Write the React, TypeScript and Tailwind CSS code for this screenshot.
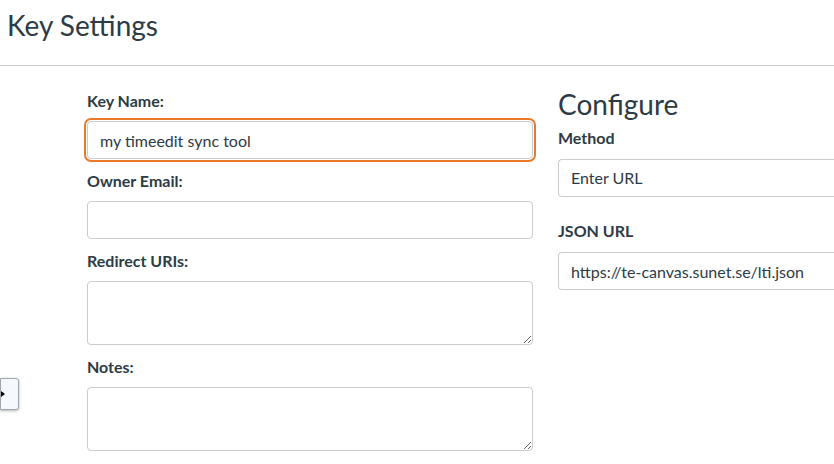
import { ChangeEvent, useState } from 'react';

const font = { fontFamily: 'Lato, "Noto Sans", sans-serif' };

const Field = ({ label, children }: { label: string; children: React.ReactNode }) => (
  <div className="mb-[11px]">
    <label className="block text-[16px] font-bold leading-[21px] mb-[10px] text-[#2d3b45]">{label}</label>
    {children}
  </div>
);

const inputCls =
  'block w-full h-[38px] px-3 text-[16px] text-[#2d3b45] bg-white border border-[#c7cdd1] rounded-[4px]';

const textareaCls =
  'block w-full h-[64px] px-3 py-2 text-[16px] text-[#2d3b45] bg-white border border-[#c7cdd1] rounded-[4px] outline-none resize-y';

export default function App() {
  const [keyName, setKeyName] = useState('my timeedit sync tool');
  const [jsonUrl, setJsonUrl] = useState('https://te-canvas.sunet.se/lti.json');

  return (
    <div className="w-[834px] h-[464px] overflow-hidden bg-white text-[#2d3b45]" style={font}>
      <header className="h-[66px] border-b border-[#c7cdd1] pl-[7px] pt-[6px]">
        <h1 className="text-[28px] leading-[38px] font-normal">Key Settings</h1>
      </header>

      <div className="relative flex pt-[24px]">
        <button className="absolute left-0 top-[312px] w-[19px] h-[32px] bg-[#f5f8fc] border border-[#9ea6ad] rounded-r-[3px] shadow-[0_1px_3px_rgba(0,0,0,0.3)] flex items-center">
          <span className="block w-0 h-0 border-y-[3px] border-y-transparent border-l-[4px] border-l-black" />
        </button>

        <form className="ml-[87px] w-[446px]">
          <Field label="Key Name:">
            <input
              className={`${inputCls} outline-2 outline-solid outline-offset-1 outline-[#e87a2a]`}
              value={keyName}
              onChange={(e: ChangeEvent<HTMLInputElement>) => setKeyName(e.target.value)}
            />
          </Field>
          <Field label="Owner Email:">
            <input className={`${inputCls} outline-none`} />
          </Field>
          <Field label="Redirect URIs:">
            <textarea className={textareaCls} />
          </Field>
          <Field label="Notes:">
            <textarea className={textareaCls} />
          </Field>
        </form>

        <section className="ml-[25px] flex-1 -mt-[4px]">
          <h2 className="text-[28px] leading-[36px] font-normal mb-[5px]">Configure</h2>
          <label className="block text-[16px] font-bold leading-[21px] mb-[11px]">Method</label>
          <div className="h-[38px] border border-[#c7cdd1] border-r-0 rounded-l-[4px] flex items-center px-3 text-[16px] mb-[23px]">
            Enter URL
          </div>
          <label className="block text-[16px] font-bold leading-[21px] mb-[11px]">JSON URL</label>
          <input
            className={`${inputCls} outline-none border-r-0 rounded-r-none`}
            value={jsonUrl}
            onChange={(e: ChangeEvent<HTMLInputElement>) => setJsonUrl(e.target.value)}
          />
        </section>
      </div>
    </div>
  );
}
